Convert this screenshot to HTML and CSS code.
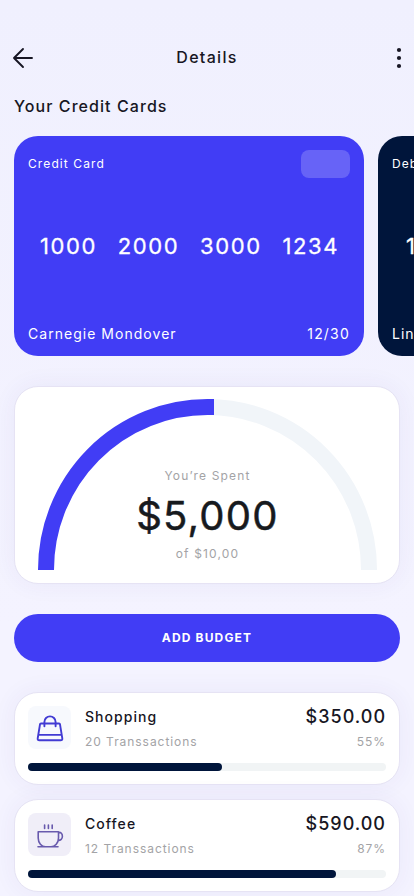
FILE: index.html
```html
<!DOCTYPE html>
<html lang="en">
<head>
<meta charset="utf-8">
<meta name="viewport" content="width=device-width, initial-scale=1">
<title>Details</title>
<link rel="stylesheet" href="styles.css">
</head>
<body>
<main class="screen">
  <header class="topbar">
    <svg class="back" viewBox="0 0 22 22" fill="none" stroke="currentColor" stroke-width="1.9" stroke-linecap="round" stroke-linejoin="round"><path d="M20 11H2M11 2 2 11l9 9"/></svg>
    <h1>Details</h1>
    <svg class="more" viewBox="0 0 6 22" fill="currentColor"><circle cx="3" cy="3" r="2.1"/><circle cx="3" cy="11" r="2.1"/><circle cx="3" cy="19" r="2.1"/></svg>
  </header>
  <h2>Your Credit Cards</h2>
  <section class="cards">
    <article class="card">
      <div class="row top"><span class="kind">Credit Card</span><span class="chip"></span></div>
      <div class="digits"><span>1000</span><span>2000</span><span>3000</span><span>1234</span></div>
      <div class="row owner"><span>Carnegie Mondover</span><span class="expiry">12/30</span></div>
    </article>
    <article class="card dark">
      <div class="row top"><span class="kind">Debit Card</span><span class="chip"></span></div>
      <div class="digits"><span>1000</span><span>2000</span><span>3000</span><span>1234</span></div>
      <div class="row owner"><span>Linda</span><span class="expiry">12/30</span></div>
    </article>
  </section>
  <section class="panel gauge">
    <svg class="arc" viewBox="0 0 386 197" fill="none" stroke-width="16">
      <path stroke="#f1f5f9" d="M193.5 20A161.5 162.5 0 0 1 355 183"/>
      <path stroke="#413df5" d="M32.020 183A161.500 162.500 0 0 1 193.500 20H200"/>
    </svg>
    <div class="spent">
      <span class="label">You’re Spent</span>
      <strong>$5,000</strong>
      <span class="limit">of $10,00</span>
    </div>
  </section>
  <button class="add">ADD BUDGET</button>
  <section class="panel item">
    <div class="info">
      <div class="icon"><svg viewBox="0 0 28 28" fill="none" stroke="#423bd3" stroke-width="1.9" stroke-linecap="round" stroke-linejoin="round"><path d="M5 9.500h18a1 1 0 0 1 1 .8l2.300 14c.2 1.400-.4 2-1.700 2H3.400c-1.300 0-1.900-.6-1.700-2L4 10.300a1 1 0 0 1 1-.8ZM2.500 20.900h23M8.400 12.300V8a5.600 5.600 0 0 1 11.200 0v4.300"/></svg></div>
      <div class="name"><h3>Shopping</h3><p>20 Transsactions</p></div>
      <div class="amount"><strong>$350.00</strong><p>55%</p></div>
    </div>
    <div class="track"><div class="fill" style="width:54.3%"></div></div>
  </section>
  <section class="panel item">
    <div class="info">
      <div class="icon coffee"><svg viewBox="0 0 28 28" fill="none" stroke="#685aad" stroke-width="1.6" stroke-linecap="round" stroke-linejoin="round"><path d="M2.200 10.800h20.300V17c0 4.800-3.500 8.800-7.500 8.800H9.500C5.500 25.800 2.200 21.800 2.200 17ZM2 25.800h20M22.500 11.400c2.400-.4 3.900 1.300 3.900 3.900s-1.700 4.200-4.300 4.100M8.600 4v3.500M12.400 4v3.500M16.200 4v3.500"/></svg></div>
      <div class="name"><h3>Coffee</h3><p>12 Transsactions</p></div>
      <div class="amount"><strong>$590.00</strong><p>87%</p></div>
    </div>
    <div class="track"><div class="fill" style="width:86.1%"></div></div>
  </section>
</main>
</body>
</html>
```
FILE: styles.css
```css
* { box-sizing: border-box; margin: 0; }
body {
  font-family: Inter, "Liberation Sans", sans-serif;
  color: #171623;
  background: #f1f0fd;
}
.screen {
  height: 896px;
  overflow: hidden;
  padding: 41px 14px 0;
  background: linear-gradient(#f0f0fe, #f4f3ff 70%);
}
.topbar { display: grid; grid-template-columns: 22px 1fr 22px; align-items: center; height: 34px; margin: 0 -2px; }
.back { width: 22px; height: 22px; }
.more { width: 6px; height: 22px; justify-self: end; }
h1 { text-align: center; font-size: 16px; font-weight: 500; line-height: 20px; letter-spacing: 1.3px; padding-bottom: 2px; }
h2 { margin-top: 21px; font-size: 16px; font-weight: 500; line-height: 20px; letter-spacing: 1.07px; }
.cards { display: flex; gap: 14px; margin: 20px -14px 0 0; overflow: hidden; }
.card {
  flex: none;
  width: 350px;
  height: 220px;
  padding: 14px;
  border-radius: 24px;
  background: #413df5;
  color: #fff;
  display: flex;
  flex-direction: column;
  justify-content: space-between;
}
.card.dark { background: #00153b; }
.row { display: flex; align-items: center; justify-content: space-between; }
.top { height: 28px; }
.kind { font-size: 12px; letter-spacing: 1.1px; padding-bottom: 1px; }
.chip { width: 49px; height: 28px; border-radius: 8px; background: rgba(255, 255, 255, .2); }
.digits { display: flex; justify-content: space-between; padding: 0 11px 12px 12px; font-size: 22px; line-height: 28px; font-weight: 400; letter-spacing: 1.6px; -webkit-text-stroke: .3px currentColor; }
.dark .digits { padding-left: 14px; }
.owner { height: 16px; font-size: 14px; letter-spacing: 1.03px; padding-bottom: 2px; }
.expiry { letter-spacing: 1.2px; }
.panel {
  background: #fff;
  border: 1px solid #e6e3f4;
  border-radius: 24px;
  box-shadow: 0 0 24px rgba(70, 50, 150, .06);
}
.gauge { display: grid; height: 198px; margin-top: 30px; }
.arc, .spent { grid-area: 1 / 1; }
.arc { width: 386px; height: 197px; margin-left: -1px; }
.spent { display: flex; flex-direction: column; align-items: center; padding-top: 80px; color: #a3a3a6; font-size: 12px; line-height: 18px; letter-spacing: 1.15px; }
.spent strong { color: #171a1e; font-size: 40px; line-height: 48px; font-weight: 400; letter-spacing: 1.25px; -webkit-text-stroke: .5px currentColor; margin: 7px 0 5px; }
.add {
  display: block;
  width: 100%;
  height: 48px;
  margin: 30px 0;
  border: 0;
  border-radius: 24px;
  background: #413df5;
  color: #fff;
  font: 700 12px/16px Inter, sans-serif;
  letter-spacing: 1.15px;
}
.item { height: 93px; padding: 13px; margin-bottom: 14px; }
.info { display: flex; height: 43px; }
.icon { width: 43px; height: 43px; border-radius: 8px; background: #f7f9fd; display: grid; place-items: center; }
.icon.coffee { background: #f0eef8; }
.icon svg { width: 28px; height: 28px; }
.name { margin-left: 14px; flex: 1; }
h3 { font-size: 14px; line-height: 22px; font-weight: 500; letter-spacing: 1.05px; }
.item p { font-size: 12px; line-height: 18px; letter-spacing: .95px; color: #a3a3a6; margin-top: 5px; }
.amount { text-align: right; }
.amount strong { display: block; font-size: 18px; line-height: 22px; font-weight: 500; letter-spacing: 1px; }
.track { height: 8px; margin-top: 14px; border-radius: 4px; background: #f1f4f5; }
.fill { height: 8px; border-radius: 4px; background: #00153b; }
```
